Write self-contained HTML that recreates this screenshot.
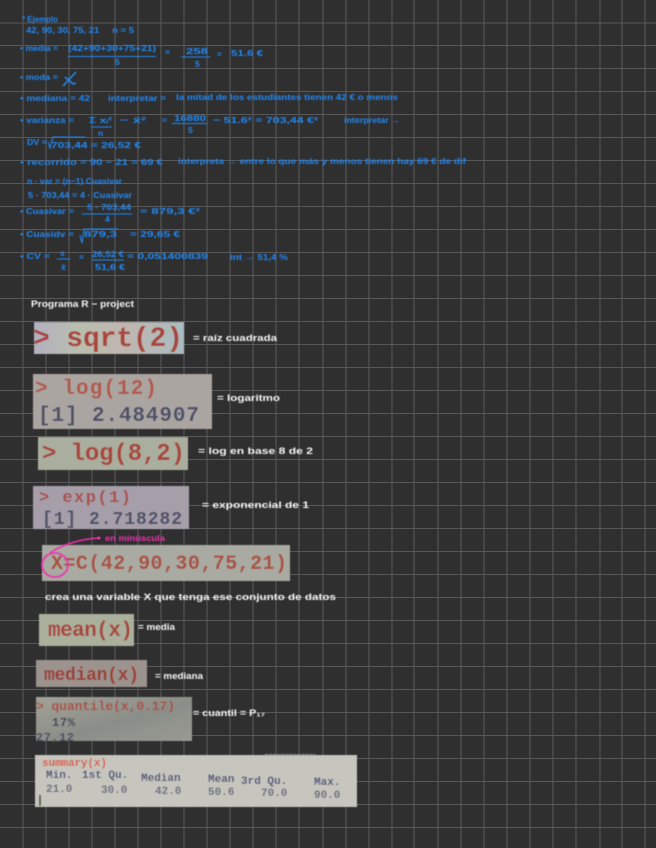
<!DOCTYPE html>
<html><head><meta charset="utf-8"><style>
html,body{margin:0;padding:0;background:#2f2f2f;width:656px;height:848px;overflow:hidden}
svg{display:block}
.b{font:bold 8.5px "Liberation Sans",sans-serif;fill:#2088f5}
.w{font:bold 9px "Liberation Sans",sans-serif;fill:#f8f8f8}
.m{font-family:"Liberation Mono",monospace;font-weight:bold}
.r{fill:#a8453c}.d{fill:#4c5068}
</style></head><body>
<svg width="656" height="848" viewBox="0 0 656 848" xmlns="http://www.w3.org/2000/svg">
<defs>
<filter id="s" x="-5%" y="-5%" width="110%" height="110%"><feGaussianBlur stdDeviation="0.4"/></filter>
<filter id="t" x="-5%" y="-5%" width="110%" height="110%"><feGaussianBlur stdDeviation="0.55"/></filter>
<linearGradient id="q" x1="0" y1="0" x2="1" y2="1"><stop offset="0" stop-color="#a3a298"/><stop offset=".55" stop-color="#8b8e88"/><stop offset="1" stop-color="#9a9a94"/></linearGradient>
<linearGradient id="sq" x1="0" y1="0" x2="1" y2="0"><stop offset="0" stop-color="#b4b0c0"/><stop offset=".3" stop-color="#b9bfae"/><stop offset=".6" stop-color="#c0b6b0"/><stop offset="1" stop-color="#a9bcc0"/></linearGradient>
</defs>
<rect width="656" height="848" fill="#2f2f2f"/>
<g stroke="#585858" stroke-width="1.1" fill="none">
<path d="M23 0V848M46 0V848M69 0V848M92 0V848M115 0V848M138 0V848M161 0V848M184 0V848M207 0V848M230 0V848M253 0V848M276 0V848M299 0V848M323 0V848M346 0V848M369 0V848M392 0V848M414 0V848M438 0V848M461 0V848M484 0V848M507 0V848M530 0V848M553 0V848M576 0V848M600 0V848M622 0V848M645 0V848"/>
<path d="M0 23H656M0 45.5H656M0 68.5H656M0 91.5H656M0 114.5H656M0 137.5H656M0 160.5H656M0 183.5H656M0 206.5H656M0 229.5H656M0 252.5H656M0 275.5H656M0 298.5H656M0 321.5H656M0 344.5H656M0 367.5H656M0 390.5H656M0 413.5H656M0 436.5H656M0 459.5H656M0 482.5H656M0 505.5H656M0 528.5H656M0 551.5H656M0 574.5H656M0 597.5H656M0 620.5H656M0 643.5H656M0 666.5H656M0 689.5H656M0 712.5H656M0 735.5H656M0 758.5H656M0 781.5H656M0 804.5H656M0 827.5H656"/>
</g>

<g filter="url(#s)">
<text class="b" x="22" y="22" textLength="36" lengthAdjust="spacingAndGlyphs">* Ejemplo</text>
<text class="b" x="26" y="33" textLength="108" lengthAdjust="spacingAndGlyphs">42, 90, 30, 75, 21 &#160; &#160; n = 5</text>
<text class="b" x="20" y="51" textLength="38" lengthAdjust="spacingAndGlyphs">• media =</text>
<text class="b" x="68" y="51" textLength="88" lengthAdjust="spacingAndGlyphs">(42+90+30+75+21)</text>
<text class="b" x="115" y="65">5</text>
<text class="b" x="165" y="55">=</text>
<text class="b" x="186" y="54" textLength="22" lengthAdjust="spacingAndGlyphs">258</text>
<text class="b" x="195" y="67">5</text>
<text class="b" x="217" y="57">=</text>
<text class="b" x="231" y="56" textLength="32" lengthAdjust="spacingAndGlyphs">51.6 €</text>
<text class="b" x="20" y="80" textLength="38" lengthAdjust="spacingAndGlyphs">• moda =</text>
<text class="b" x="20" y="101" textLength="70" lengthAdjust="spacingAndGlyphs">• mediana = 42</text>
<text class="b" x="108" y="101" textLength="58" lengthAdjust="spacingAndGlyphs">interpretar =</text>
<text class="b" x="176" y="100" textLength="222" lengthAdjust="spacingAndGlyphs">la mitad de los estudiantes tienen 42 € o menos</text>
<text class="b" x="20" y="123" textLength="54" lengthAdjust="spacingAndGlyphs">• varianza =</text>
<text class="b" x="89" y="123" textLength="23" lengthAdjust="spacingAndGlyphs">Σ xᵢ²</text>
<text class="b" x="98" y="136">n</text>
<text class="b" x="120" y="123" textLength="26" lengthAdjust="spacingAndGlyphs">− x̄²</text>
<text class="b" x="162" y="123">=</text>
<text class="b" x="174" y="121" textLength="32" lengthAdjust="spacingAndGlyphs">16880</text>
<text class="b" x="188" y="133">5</text>
<text class="b" x="213" y="123" textLength="105" lengthAdjust="spacingAndGlyphs">− 51.6² = 703,44 €²</text>
<text class="b" x="344" y="123" textLength="56" lengthAdjust="spacingAndGlyphs">interpretar →</text>
<text class="b" x="27" y="145" textLength="20" lengthAdjust="spacingAndGlyphs">DV =</text>
<text class="b" x="51" y="148" textLength="90" lengthAdjust="spacingAndGlyphs">703,44 = 26,52 €</text>
<text class="b" x="20" y="165" textLength="143" lengthAdjust="spacingAndGlyphs">• recorrido = 90 − 21 = 69 €</text>
<text class="b" x="178" y="164" textLength="288" lengthAdjust="spacingAndGlyphs">interpreta → entre lo que más y menos tienen hay 69 € de dif</text>
<text class="b" x="27" y="184" textLength="95" lengthAdjust="spacingAndGlyphs">n · var = (n−1) Cuasivar</text>
<text class="b" x="28" y="198" textLength="104" lengthAdjust="spacingAndGlyphs">5 · 703,44 = 4 · Cuasivar</text>
<text class="b" x="20" y="214" textLength="54" lengthAdjust="spacingAndGlyphs">• Cuasivar =</text>
<text class="b" x="87" y="210" textLength="44" lengthAdjust="spacingAndGlyphs">5 · 703,44</text>
<text class="b" x="105" y="222">4</text>
<text class="b" x="140" y="214" textLength="60" lengthAdjust="spacingAndGlyphs">= 879,3 €²</text>
<text class="b" x="20" y="237" textLength="54" lengthAdjust="spacingAndGlyphs">• Cuasidv =</text>
<text class="b" x="84" y="237" textLength="33" lengthAdjust="spacingAndGlyphs">879,3</text>
<text class="b" x="130" y="237" textLength="50" lengthAdjust="spacingAndGlyphs">= 29,65 €</text>
<text class="b" x="20" y="259" textLength="30" lengthAdjust="spacingAndGlyphs">• CV =</text>
<text class="b" x="60" y="256">s</text>
<text class="b" x="61" y="270">x̄</text>
<text class="b" x="79" y="260">=</text>
<text class="b" x="92" y="257" textLength="32" lengthAdjust="spacingAndGlyphs">26,52 €</text>
<text class="b" x="95" y="270" textLength="30" lengthAdjust="spacingAndGlyphs">51,6 €</text>
<text class="b" x="127" y="259" textLength="81" lengthAdjust="spacingAndGlyphs">= 0,051400839</text>
<text class="b" x="230" y="260" textLength="58" lengthAdjust="spacingAndGlyphs">int → 51,4 %</text>
</g>
<g fill="none" stroke="#2088f5" stroke-width="1.1" filter="url(#s)">
<path d="M68 56.5H156M181 57H210M91 127H112M172 123.5H207M82 214H132M92 260H124M57 259H70"/>
<path d="M48 142l2 6 3-11H85M80 235l2 8 2-14H118"/>
<path d="M63 86L76 72M65 77l8 7 3-1" stroke-width="1.6"/>
</g>

<g filter="url(#s)">
<text class="w" x="31" y="307" textLength="103" lengthAdjust="spacingAndGlyphs">Programa R − project</text>
<text class="w" x="193" y="341" textLength="84" lengthAdjust="spacingAndGlyphs">= raíz cuadrada</text>
<text class="w" x="217" y="401" textLength="63" lengthAdjust="spacingAndGlyphs">= logaritmo</text>
<text class="w" x="198" y="454" textLength="115" lengthAdjust="spacingAndGlyphs">= log en base 8 de 2</text>
<text class="w" x="202" y="508" textLength="107" lengthAdjust="spacingAndGlyphs">= exponencial de 1</text>
<text class="w" x="45" y="600" textLength="291" lengthAdjust="spacingAndGlyphs">crea una variable X que tenga ese conjunto de datos</text>
<text class="w" x="138" y="630" textLength="37" lengthAdjust="spacingAndGlyphs">= media</text>
<text class="w" x="155" y="679" textLength="48" lengthAdjust="spacingAndGlyphs">= mediana</text>
<text class="w" x="193" y="716" textLength="72" lengthAdjust="spacingAndGlyphs">= cuantil = P₁₇</text>
<text x="105" y="541" font-family="Liberation Sans" font-weight="bold" font-size="8.5" fill="#f22fb0" textLength="60" lengthAdjust="spacingAndGlyphs">en minúscula</text>
</g>

<g filter="url(#t)">
<rect x="34" y="322" width="150" height="32" fill="url(#sq)"/>
<text class="m r" x="33" y="346" font-size="28" textLength="150" lengthAdjust="spacing">&gt; sqrt(2)</text>

<rect x="33" y="374" width="179" height="55" fill="#aba5a1"/>
<text class="m" fill="#b0584a" x="35" y="394" font-size="21" textLength="122" lengthAdjust="spacing">&gt; log(12)</text>
<text class="m d" x="38" y="421" font-size="21" textLength="161" lengthAdjust="spacing">[1] 2.484907</text>

<rect x="38" y="437" width="150" height="33" fill="#aaae9e"/>
<text class="m r" x="42" y="460" font-size="24" textLength="143" lengthAdjust="spacing">&gt; log(8,2)</text>

<rect x="33" y="486" width="156" height="43" fill="#a69ea8"/>
<text class="m" fill="#a8504a" x="39" y="502" font-size="17" textLength="92" lengthAdjust="spacing">&gt; exp(1)</text>
<text class="m d" x="42" y="524" font-size="18" textLength="140" lengthAdjust="spacing">[1] 2.718282</text>

<rect x="42" y="545" width="248" height="36" fill="#a9aaa2"/>
<text class="m" fill="#a9503f" x="51" y="569" font-size="20" textLength="236" lengthAdjust="spacing">X=C(42,90,30,75,21)</text>

<rect x="39" y="614" width="95" height="32" fill="#abb09c"/>
<text class="m r" x="48" y="636" font-size="21" textLength="85" lengthAdjust="spacing">mean(x)</text>

<rect x="36" y="660" width="111" height="27" fill="#9d938e"/>
<text class="m" fill="#9c3c34" x="44" y="680" font-size="18" textLength="95" lengthAdjust="spacing">median(x)</text>

<rect x="36" y="697" width="156" height="44" fill="url(#q)"/>
<text class="m" fill="#a85044" x="36" y="710" font-size="13" textLength="139" lengthAdjust="spacing">&gt; quantile(x,0.17)</text>
<text class="m" fill="#3e4258" x="52" y="726" font-size="12" textLength="23" lengthAdjust="spacing">17%</text>
<text class="m" fill="#4a4e60" x="36" y="741" font-size="12" textLength="38" lengthAdjust="spacing">27,12</text>

<rect x="35" y="755" width="322" height="52" fill="#c6c6be"/>
<path d="M265 754.5H315" stroke="#777" stroke-width="1.5" stroke-dasharray="3 1"/>
<text class="m" fill="#d8583f" x="42" y="766" font-size="11" textLength="65" lengthAdjust="spacing">summary(x)</text>
<g class="m" font-size="11" fill="#50537a">
<text x="46" y="778">Min.</text><text x="82" y="778">1st Qu.</text><text x="141" y="781">Median</text><text x="208" y="782">Mean</text><text x="241" y="784">3rd Qu.</text><text x="314" y="785">Max.</text>
</g>
<g class="m" font-size="11" fill="#6a6c80">
<text x="46" y="792">21.0</text><text x="101" y="793">30.0</text><text x="155" y="794">42.0</text><text x="208" y="795">50.6</text><text x="261" y="796">70.0</text><text x="314" y="798">90.0</text>
</g>
<rect x="39" y="795" width="2" height="11" fill="#5c5f50"/>
</g>

<g fill="none" stroke="#f22fb0" stroke-width="1.6" filter="url(#s)">
<ellipse cx="55" cy="565" rx="13" ry="12"/>
<path d="M50 553C60 546 78 539 99 538"/>
</g>
<circle cx="99" cy="538" r="1.5" fill="#f22fb0"/>
</svg>
</body></html>
